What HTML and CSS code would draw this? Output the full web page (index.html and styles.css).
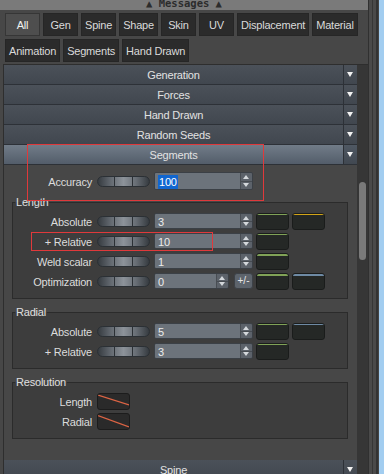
FILE: index.html
```html
<!DOCTYPE html>
<html lang="en">
<head>
    <meta charset="UTF-8">
    <meta name="viewport" content="width=device-width, initial-scale=1.0">
    <title>Segments</title>
    <link rel="stylesheet" href="styles.css">
</head>
<body>

<div class="app">
    <div class="window">
        <div class="msgbar"><span class="msgtitle">▲ Messages ▲</span></div>

        <div class="tabs">
            <div class="tabrow">
                <span class="tab active">All</span>
                <span class="tab">Gen</span>
                <span class="tab">Spine</span>
                <span class="tab">Shape</span>
                <span class="tab">Skin</span>
                <span class="tab">UV</span>
                <span class="tab">Displacement</span>
                <span class="tab">Material</span>
            </div>
            <div class="tabrow">
                <span class="tab">Animation</span>
                <span class="tab">Segments</span>
                <span class="tab">Hand Drawn</span>
            </div>
        </div>

        <div class="panel">
            <div class="sections">
                <div class="sec"><span class="sec-title">Generation</span><span class="sec-arrow"></span></div>
                <div class="sec"><span class="sec-title">Forces</span><span class="sec-arrow"></span></div>
                <div class="sec"><span class="sec-title">Hand Drawn</span><span class="sec-arrow"></span></div>
                <div class="sec"><span class="sec-title">Random Seeds</span><span class="sec-arrow"></span></div>
                <div class="sec open"><span class="sec-title">Segments</span><span class="sec-arrow"></span></div>

                <div class="sec-body">
                    <div class="row first">
                        <span class="lbl">Accuracy</span>
                        <span class="slider"><span></span><span></span><span></span></span>
                        <span class="spin tall"><span class="spin-val"><span class="sel">100</span></span><span class="spin-btn"></span></span>
                    </div>

                    <fieldset class="grp">
                        <legend>Length</legend>
                        <div class="rows">
                            <div class="row">
                                <span class="lbl">Absolute</span>
                                <span class="slider"><span></span><span></span><span></span></span>
                                <span class="spin"><span class="spin-val">3</span><span class="spin-btn"></span></span>
                                <span class="sw green"></span>
                                <span class="sw yellow"></span>
                            </div>
                            <div class="row">
                                <span class="lbl">+ Relative</span>
                                <span class="slider"><span></span><span></span><span></span></span>
                                <span class="spin"><span class="spin-val">10</span><span class="spin-btn"></span></span>
                                <span class="sw green"></span>
                            </div>
                            <div class="row">
                                <span class="lbl">Weld scalar</span>
                                <span class="slider"><span></span><span></span><span></span></span>
                                <span class="spin"><span class="spin-val">1</span><span class="spin-btn"></span></span>
                                <span class="sw green"></span>
                            </div>
                            <div class="row">
                                <span class="lbl">Optimization</span>
                                <span class="slider"><span></span><span></span><span></span></span>
                                <span class="spin short"><span class="spin-val">0</span><span class="spin-btn"></span></span>
                                <span class="pm">+/-</span>
                                <span class="sw green"></span>
                                <span class="sw blue"></span>
                            </div>
                        </div>
                    </fieldset>

                    <fieldset class="grp">
                        <legend>Radial</legend>
                        <div class="rows">
                            <div class="row">
                                <span class="lbl">Absolute</span>
                                <span class="slider"><span></span><span></span><span></span></span>
                                <span class="spin"><span class="spin-val">5</span><span class="spin-btn"></span></span>
                                <span class="sw green"></span>
                                <span class="sw blue"></span>
                            </div>
                            <div class="row">
                                <span class="lbl">+ Relative</span>
                                <span class="slider"><span></span><span></span><span></span></span>
                                <span class="spin"><span class="spin-val">3</span><span class="spin-btn"></span></span>
                                <span class="sw green"></span>
                            </div>
                        </div>
                    </fieldset>

                    <fieldset class="grp">
                        <legend>Resolution</legend>
                        <div class="rows">
                            <div class="row">
                                <span class="lbl">Length</span>
                                <span class="curve"><svg width="31" height="15" viewBox="0 0 31 15"><line x1="0" y1="1" x2="31" y2="11" stroke="#dc6444" stroke-width="1.2"/></svg></span>
                            </div>
                            <div class="row">
                                <span class="lbl">Radial</span>
                                <span class="curve"><svg width="31" height="15" viewBox="0 0 31 15"><line x1="0" y1="1.5" x2="31" y2="13" stroke="#dc6444" stroke-width="1.2"/></svg></span>
                            </div>
                        </div>
                    </fieldset>
                </div>

                <div class="sec"><span class="sec-title">Spine</span><span class="sec-arrow"></span></div>
            </div>
            <div class="track"><div class="thumb"></div></div>
        </div>
    </div>
    <div class="frame"></div>
    <div class="desk"></div>
</div>

<!-- marcas rojas de anotacion -->
<div class="mark mark-seg"></div>
<div class="mark mark-rel"></div>

</body>
</html>
```

FILE: styles.css
```css
body {
    margin: 0;
    background: #474747;
    font-family: "Liberation Sans", Arial, sans-serif;
    font-size: 11px;
    letter-spacing: -0.2px;
    color: #dcdcdc;
    overflow: hidden;
}
.app {
    display: flex;
    height: 474px;
}
.window {
    width: 368px;
    display: flex;
    flex-direction: column;
}
.msgbar {
    flex: none;
    height: 10px;
    background: #7a7a7a;
    overflow: hidden;
    text-align: center;
}
.msgtitle {
    display: block;
    margin-top: -4px;
    line-height: 14px;
    font-family: "DejaVu Sans Mono", monospace;
    font-weight: bold;
    font-size: 10.5px;
    letter-spacing: 0;
    color: #2c2c2c;
}
.frame {
    width: 11px;
    background: linear-gradient(to right, #303030 0 1px, #4a4a4a 1px 4px, #363636 4px 5px, #4a4a4a 5px 8px, #333 8px 10px, #444 10px);
}
.desk {
    flex: 1;
    background: #a2cdf0;
}

/* tabs */
.tabs {
    flex: none;
    padding: 3px 0 0 5px;
    display: flex;
    flex-direction: column;
    gap: 3px;
}
.tabrow {
    display: flex;
    gap: 3px;
}
.tab {
    min-width: 35px;
    height: 23px;
    box-sizing: border-box;
    padding: 2px 3px 0;
    background: #2b2b2b;
    border: 1px solid #262626;
    line-height: 19px;
    text-align: center;
    color: #dadada;
}
.tab.active {
    background: #4e4e4e;
    border-color: #363636;
    color: #f0f0f0;
}

/* panel */
.panel {
    flex: 1;
    display: flex;
    margin-top: 2px;
    padding-left: 3px;
    min-height: 0;
}
.sections {
    flex: 1;
    border-left: 1px solid #2e2e2e;
    border-top: 1px solid #2e2e2e;
    overflow: hidden;
}
.track {
    width: 11px;
    background: #363636;
    border-top: 1px solid #2e2e2e;
}
.thumb {
    width: 7px;
    height: 78px;
    margin: 117px 0 0 2px;
    background: #7a7a7a;
    border-radius: 4px;
}

.sec {
    display: flex;
    height: 19px;
    border-bottom: 1px solid #2d3137;
    background: linear-gradient(#4b5159, #41474f);
}
.sec-title {
    flex: 1;
    text-align: center;
    padding-top: 2px;
    line-height: 17px;
    color: #e2e2e2;
}
.sec-arrow {
    width: 13px;
    border-left: 1px solid #2d3137;
    position: relative;
}
.sec-arrow::after {
    content: "";
    position: absolute;
    left: 3px;
    top: 7px;
    border-left: 3.5px solid transparent;
    border-right: 3.5px solid transparent;
    border-top: 5px solid #f2f2f2;
}
.sec.open {
    background: linear-gradient(#717c88, #535d6a);
}
.sec.open .sec-arrow {
    background: linear-gradient(#4f5863, #414851);
}

.sec-body {
    padding: 6px 9px 21px 8px;
}

/* rows */
.row {
    display: flex;
    align-items: center;
    height: 20px;
}
.row.first {
    padding-left: 1px;
}
.lbl {
    width: 79px;
    margin-right: 5px;
    padding-top: 1px;
    text-align: right;
    white-space: nowrap;
}
.slider {
    display: flex;
    width: 53px;
    height: 11px;
    box-sizing: border-box;
    margin-right: 4px;
    border: 1px solid #2b3035;
    border-radius: 6px;
    overflow: hidden;
    background: linear-gradient(to right, #363b40, #636970 25%, #8d939a 50%, #676d74 75%, #363b40);
}
.slider span {
    flex: 1;
}
.slider span + span {
    border-left: 1px solid #2c3136;
}
.spin {
    display: flex;
    width: 99px;
    height: 16px;
    box-sizing: border-box;
    border: 1px solid #3b4046;
    border-radius: 2px;
    overflow: hidden;
}
.spin.tall {
    height: 18px;
}
.spin.short {
    width: 75px;
}
.spin-val {
    flex: 1;
    display: flex;
    align-items: center;
    background: #6c737b;
    padding: 1px 0 0 3px;
    color: #ececec;
}
.sel {
    background: #1166d0;
    color: #fff;
    padding: 0 1px;
    line-height: 14px;
}
.spin-btn {
    width: 11px;
    position: relative;
    border-left: 1px solid #484d53;
    background: linear-gradient(#5c626a 0 50%, #464b51 50% calc(50% + 1px), #5c626a calc(50% + 1px));
}
.spin-btn::before,
.spin-btn::after {
    content: "";
    position: absolute;
    left: 2px;
    border-left: 3.5px solid transparent;
    border-right: 3.5px solid transparent;
}
.spin-btn::before {
    top: 2px;
    border-bottom: 4px solid #d4d8dc;
}
.spin-btn::after {
    bottom: 2px;
    border-top: 4px solid #d4d8dc;
}
.pm {
    width: 19px;
    height: 16px;
    box-sizing: border-box;
    margin-left: 5px;
    border: 1px solid #3d4248;
    border-radius: 3px;
    background: #5d646c;
    text-align: center;
    line-height: 14px;
    font-size: 10px;
    letter-spacing: 0;
    color: #e8e8e8;
}
.sw {
    width: 33px;
    height: 17px;
    box-sizing: border-box;
    margin-left: 3px;
    border: 1px solid #1a1c1b;
    border-radius: 3px;
    background: #252826;
}
.sw.green {
    background: linear-gradient(#80a257 0 1.5px, #252826 1.5px);
}
.sw.yellow {
    background: linear-gradient(#d2a418 0 1.5px, #252826 1.5px);
}
.sw.blue {
    background: linear-gradient(#6e8aa4 0 1.5px, #252826 1.5px);
}
.curve {
    width: 33px;
    height: 17px;
    box-sizing: border-box;
    border: 1px solid #1c1c1c;
    border-radius: 3px;
    background: #2a2a2a;
    overflow: hidden;
}
.curve svg {
    display: block;
}

/* groups */
.grp {
    margin: 5px 0 0;
    padding: 0 0 7px;
    min-width: 0;
    border: 1px solid #2b2b2b;
    background: #3d3d3d;
}
.grp + .grp {
    margin-top: 7px;
}
.grp legend {
    margin-left: 2px;
    padding: 0 1px;
    line-height: 12px;
    color: #e0e0e0;
}
.rows {
    padding-top: 3px;
}

.mark {
    position: absolute;
    border: 1px solid #e0393b;
    pointer-events: none;
}
.mark-seg {
    left: 27px;
    top: 144px;
    width: 235px;
    height: 55px;
}
.mark-rel {
    left: 31px;
    top: 232px;
    width: 180px;
    height: 17px;
}
```
